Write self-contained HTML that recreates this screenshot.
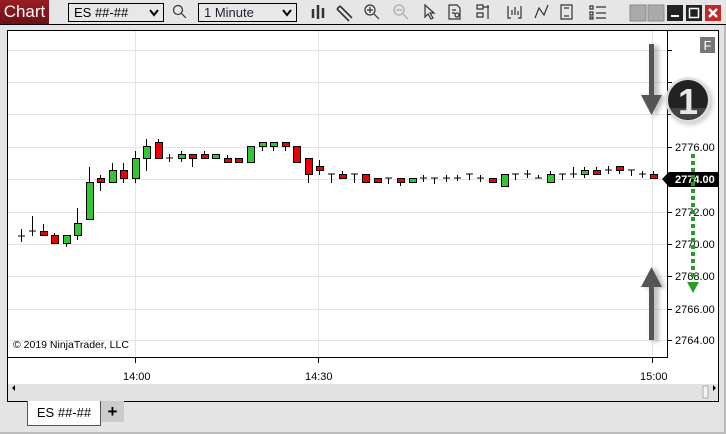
<!DOCTYPE html>
<html><head><style>
*{margin:0;padding:0;box-sizing:border-box}
body{width:726px;height:434px;background:#e4e4e4;font-family:"Liberation Sans",sans-serif;position:relative;overflow:hidden}
.abs{position:absolute}
.combo{position:absolute;top:3px;height:19px;border:1px solid #000;background:#e8e8e8;font-size:13px;line-height:17px;padding-left:5px}
.combo svg{position:absolute;right:4px;top:5px}
</style></head><body>
<div class="abs" style="left:0;top:0;width:726px;height:25px;background:#e6e6e6;border-bottom:1px solid #000"></div>
<div class="abs" style="left:0;top:0;width:49px;height:24px;background:linear-gradient(#9a1c22,#6e1015);color:#fff;font-size:17px;line-height:24px;text-align:center">Chart</div>
<div class="combo" style="left:68px;width:96px">ES ##-##<svg width="10" height="8"><path d="M1 1 L5 6 L9 1" stroke="#000" stroke-width="2" fill="none"/></svg></div>
<div class="combo" style="left:198px;width:99px;color:#223">1 Minute<svg width="10" height="8"><path d="M1 1 L5 6 L9 1" stroke="#000" stroke-width="2" fill="none"/></svg></div>
<svg class="abs" style="left:0;top:0" width="726" height="25">
<g stroke="#333" fill="none" stroke-width="1.2">
<circle cx="178" cy="10" r="4.5"/><path d="M181 13 L186 18"/>
<path d="M313 9v9M318 5v14M323 8v10" stroke-width="2.5"/>
<path d="M340 6 L352 18 M337 9 L349 21 M340 6 L337 9" stroke-width="1.6"/>
<circle cx="370" cy="10" r="5"/><path d="M374 14 L379 19 M367 10h6 M370 7v6"/>
<g stroke="#aaa"><circle cx="399" cy="10" r="5"/><path d="M403 14 L408 19 M396 10h6"/></g>
<path d="M425 5 L425 17 L428 14 L431 19 L433 18 L430 13 L434 13 Z"/>
<path d="M449 5h8l3 3v11h-11z M452 10h4 M452 13h3"/><circle cx="457" cy="15" r="2"/>
<path d="M477 5h6v4h-6z M477 9h6 M483 7h6 M488 5v14 M477 13h6v4h-6z"/>
<path d="M508 6v12h3 M521 6v12h-3 M512 15v-5 M515 15v-8 M518 15v-4"/>
<path d="M535 18 L539 8 L544 15 L548 5"/>
<path d="M561 5h11v14h-11z M564 8h5 M564 16h5"/>
<path d="M590 6h3v3h-3z M590 12h3v3h-3z M590 17h3v2h-3z M596 7h10 M596 13h10 M596 18h10"/>
</g>
<rect x="630" y="5" width="16" height="16" fill="#aaa" stroke="#888"/>
<rect x="648" y="5" width="16" height="16" fill="#aaa" stroke="#888"/>
<rect x="667" y="5" width="16" height="16" fill="#222"/><rect x="671" y="15" width="8" height="2" fill="#fff"/>
<rect x="686" y="5" width="16" height="16" fill="#222"/><rect x="689.5" y="8.5" width="9" height="9" fill="none" stroke="#fff" stroke-width="1.5"/>
<rect x="705" y="5" width="16" height="16" fill="#c0282a"/><path d="M709 9 L717 17 M717 9 L709 17" stroke="#fff" stroke-width="2.5"/>
</svg>
<div class="abs" style="left:7px;top:30px;width:712px;height:372px;background:#fff;border:1px solid #000"></div>
<div class="abs" style="left:8px;top:384px;width:710px;height:17px;background:#e2e2e2"></div>
<svg class="abs" style="left:0;top:0" width="726" height="434" font-family="Liberation Sans" font-size="11">
<g stroke="#e4e4e4" stroke-width="1">
<path d="M8 50.5h659M8 82.5h659M8 114.5h659M8 147.5h659M8 179.5h659M8 212.5h659M8 244.5h659M8 276.5h659M8 309.5h659M8 340.5h659"/>
<path d="M135.5 31v326M318.5 31v326M652.5 31v326"/>
</g>
<path d="M8 357.5h659M667.5 31v327" stroke="#000"/>
<g stroke="#000"><path d="M667 50.5h5M667 82.5h5M667 114.5h5M667 147.5h5M667 179.5h5M667 212.5h5M667 244.5h5M667 276.5h5M667 309.5h5M667 340.5h5M135.5 357v6M318.5 357v6M652.5 357v6"/></g>
<g fill="#000">
<text x="675" y="151">2776.00</text><text x="675" y="216">2772.00</text><text x="675" y="248">2770.00</text><text x="675" y="280">2768.00</text><text x="675" y="313">2766.00</text><text x="675" y="344">2764.00</text>
<text x="123" y="380">14:00</text><text x="305" y="380">14:30</text><text x="640" y="380">15:00</text>
<text x="13" y="348" font-size="10.5">© 2019 NinjaTrader, LLC</text>
</g>
<path d="M662 179 L669 172 H718 V187 H669 Z" fill="#000"/>
<text x="675" y="183" fill="#fff" font-weight="bold">2774.00</text>
<path d="M12 388 l3 -3 v6z M713 385 l3 3 -3 3z" fill="#000"/>
<rect x="703" y="386" width="5" height="12" fill="#f4f4f4" stroke="#aaa"/>
<g stroke="#000" stroke-width="1">
<path d="M21.5 229v13M18 236h7 M32.5 216v20M29 231h7 M43.5 224v12 M54.5 233v10 M66.5 235v12 M77.5 208v32 M89.5 167v52 M100.5 175v16 M112.5 163v19 M123.5 163v20 M135.5 151v32 M146.5 139v32 M158.5 139v19 M169.5 154v8M166 158h7 M181.5 151v11 M192.5 154v13 M204.5 151v7 M215.5 154v4 M227.5 155v7 M238.5 158v4 M250.5 146v16 M262.5 142v9 M273.5 142v9 M285.5 142v9 M296.5 146v16 M308.5 158v25 M319.5 160v15 M331.5 174v9M328 174h7 M342.5 171v7 M354.5 174v9M351 174h7 M366.5 174v8 M377.5 178v4 M388.5 178v6M385 178h7 M400.5 178v8 M412.5 178v4 M423.5 175v7M420 178h7 M434.5 178v6M431 178h7 M446.5 175v7M443 178h7 M457.5 175v6M454 178h7 M469.5 174v6M466 174h7 M480.5 175v7M477 178h7 M492.5 178v4 M504.5 174v12 M515.5 174v6M512 174h7 M527.5 170v8M524 174h7 M538.5 175v3M535 178h7 M550.5 171v11 M562.5 174v6M559 174h7 M573.5 167v11M570 174h7 M584.5 167v11 M596.5 167v7 M608.5 166v8M605 170h7 M619.5 166v8 M631.5 170v6M628 170h7 M642.5 171v7M639 174h7 M653.5 171v7"/>
</g>
<g stroke="#000" stroke-width="1">
<g fill="#e00">
<rect x="40.5" y="231.5" width="7" height="4"/><rect x="51.5" y="235.5" width="7" height="8"/><rect x="97.5" y="178.5" width="7" height="4"/><rect x="120.5" y="170.5" width="7" height="8"/><rect x="155.5" y="142.5" width="7" height="16"/><rect x="189.5" y="154.5" width="7" height="4"/><rect x="201.5" y="154.5" width="7" height="4"/><rect x="224.5" y="158.5" width="7" height="4"/><rect x="235.5" y="158.5" width="7" height="4"/><rect x="282.5" y="142.5" width="7" height="4"/><rect x="293.5" y="146.5" width="7" height="16"/><rect x="305.5" y="158.5" width="7" height="16"/><rect x="316.5" y="166.5" width="7" height="4"/><rect x="339.5" y="174.5" width="7" height="4"/><rect x="362.5" y="174.5" width="7" height="8"/><rect x="374.5" y="178.5" width="7" height="4"/><rect x="397.5" y="178.5" width="7" height="4"/><rect x="489.5" y="178.5" width="7" height="4"/><rect x="593.5" y="170.5" width="7" height="4"/><rect x="616.5" y="166.5" width="7" height="4"/><rect x="650.5" y="174.5" width="7" height="4"/>
</g>
<g fill="#33c633">
<rect x="63.5" y="235.5" width="7" height="8"/><rect x="74.5" y="223.5" width="7" height="12"/><rect x="86.5" y="182.5" width="7" height="37"/><rect x="109.5" y="170.5" width="7" height="12"/><rect x="132.5" y="158.5" width="7" height="20"/><rect x="143.5" y="146.5" width="7" height="12"/><rect x="178.5" y="154.5" width="7" height="4"/><rect x="212.5" y="154.5" width="7" height="4"/><rect x="247.5" y="146.5" width="7" height="16"/><rect x="259.5" y="142.5" width="7" height="4"/><rect x="270.5" y="142.5" width="7" height="4"/><rect x="409.5" y="178.5" width="7" height="4"/><rect x="501.5" y="174.5" width="7" height="12"/><rect x="547.5" y="174.5" width="7" height="8"/><rect x="581.5" y="170.5" width="7" height="4"/>
</g></g>
<defs><filter id="sh" x="-50%" y="-50%" width="200%" height="200%"><feGaussianBlur stdDeviation="2"/></filter></defs>
<g fill="#999" opacity=".6" filter="url(#sh)"><rect x="651" y="46" width="8" height="52"/><path d="M644 96h22l-11 22z"/><rect x="651" y="286" width="8" height="56"/><path d="M644 288h22l-11 -21z"/></g>
<g fill="#555"><rect x="649" y="44" width="5" height="52"/><path d="M641 95h21l-10.5 20z"/><rect x="649" y="286" width="5" height="54"/><path d="M641 287h21l-10.5 -20z"/></g>
<path d="M693 154V280" stroke="#2a9a2a" stroke-width="4" stroke-dasharray="4 3"/>
<path d="M687 282h12l-6 11z" fill="#2a9a2a"/>
<circle cx="690" cy="102" r="23" fill="#888" opacity=".4" filter="url(#sh)"/>
<circle cx="688" cy="100" r="22.5" fill="#ddd"/>
<circle cx="688" cy="100" r="20" fill="#222"/>
<path d="M670 108 a20 20 0 0 0 36 0z" fill="#444"/>
<text x="688" y="114" text-anchor="middle" font-size="36" font-weight="bold" fill="#e8e8e8">1</text>
<rect x="700" y="37" width="15" height="16" fill="#777"/>
<text x="707.5" y="50" text-anchor="middle" font-size="13" fill="#fff">F</text>
</svg>
<div class="abs" style="left:27px;top:401px;width:74px;height:25px;background:#fff;border:1px solid #555;border-top:none;font-size:13px;line-height:24px;text-align:center">ES ##-##</div>
<div class="abs" style="left:101px;top:401px;width:23px;height:21px;background:#ccc;font-size:17px;line-height:21px;text-align:center;font-weight:bold">+</div>
<div class="abs" style="left:724px;top:25px;width:2px;height:409px;background:#bbb"></div>
<div class="abs" style="left:0;top:432px;width:726px;height:2px;background:#bbb"></div>
</body></html>
